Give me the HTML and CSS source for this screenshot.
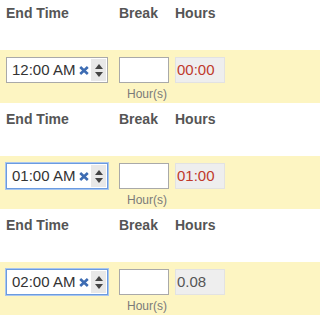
FILE: index.html
```html
<!DOCTYPE html>
<html>
<head>
<meta charset="utf-8">
<link rel="stylesheet" href="styles.css">
</head>
<body>
<div class="block">
  <div class="head">
    <div class="c1">End Time</div>
    <div class="c2">Break</div>
    <div class="c3">Hours</div>
  </div>
  <div class="row">
    <div class="c1">
      <div class="time">
        <span class="val">12:00 AM</span>
        <svg class="clear" width="10" height="9" viewBox="0 0 10 9"><path d="M1.2 1 L8.8 8 M8.8 1 L1.2 8" stroke="#3d6cb3" stroke-width="2.6"/></svg>
        <span class="spin"><i class="up"></i><i class="down"></i></span>
      </div>
    </div>
    <div class="c2">
      <div class="brk"></div>
      <div class="unit">Hour(s)</div>
    </div>
    <div class="c3"><div class="hrs red">00:00</div></div>
  </div>
</div>
<div class="block">
  <div class="head">
    <div class="c1">End Time</div>
    <div class="c2">Break</div>
    <div class="c3">Hours</div>
  </div>
  <div class="row">
    <div class="c1">
      <div class="time focus">
        <span class="val">01:00 AM</span>
        <svg class="clear" width="10" height="9" viewBox="0 0 10 9"><path d="M1.2 1 L8.8 8 M8.8 1 L1.2 8" stroke="#3d6cb3" stroke-width="2.6"/></svg>
        <span class="spin"><i class="up"></i><i class="down"></i></span>
      </div>
    </div>
    <div class="c2">
      <div class="brk"></div>
      <div class="unit">Hour(s)</div>
    </div>
    <div class="c3"><div class="hrs red">01:00</div></div>
  </div>
</div>
<div class="block">
  <div class="head">
    <div class="c1">End Time</div>
    <div class="c2">Break</div>
    <div class="c3">Hours</div>
  </div>
  <div class="row">
    <div class="c1">
      <div class="time focus">
        <span class="val">02:00 AM</span>
        <svg class="clear" width="10" height="9" viewBox="0 0 10 9"><path d="M1.2 1 L8.8 8 M8.8 1 L1.2 8" stroke="#3d6cb3" stroke-width="2.6"/></svg>
        <span class="spin"><i class="up"></i><i class="down"></i></span>
      </div>
    </div>
    <div class="c2">
      <div class="brk"></div>
      <div class="unit">Hour(s)</div>
    </div>
    <div class="c3"><div class="hrs">0.08</div></div>
  </div>
</div>
</body>
</html>
```
FILE: styles.css
```css
html, body {
  margin: 0;
  padding: 0;
  background: #fff;
  font-family: "Liberation Sans", Arial, sans-serif;
}
.block {
  margin-bottom: 3px;
}
.head {
  height: 50px;
  box-sizing: border-box;
  padding: 5px 0 0 6px;
  display: flex;
  font-size: 14px;
  line-height: 16px;
  font-weight: bold;
  color: #555;
}
.c1 { width: 113px; flex: none; }
.c2 { width: 56px; flex: none; }
.c3 { width: 50px; flex: none; }
.row {
  height: 53px;
  box-sizing: border-box;
  padding: 7px 0 0 6px;
  display: flex;
  background: #fdf5c2;
}
.time {
  width: 102px;
  height: 26px;
  box-sizing: border-box;
  border: 1px solid #a9a9a9;
  background: #fff;
  display: flex;
  align-items: center;
  padding-left: 5px;
}
.time.focus {
  border-color: #6b9be0;
  box-shadow: 0 0 0 1px #a9c6ee;
}
.val {
  font-size: 15px;
  color: #333;
  line-height: 18px;
  width: 67px;
  flex: none;
  white-space: nowrap;
}
.clear {
  flex: none;
  display: block;
}
.spin {
  margin-left: 2px;
  width: 15px;
  height: 22px;
  background: #e8e8e8;
  display: flex;
  flex-direction: column;
  align-items: center;
  justify-content: center;
  gap: 3px;
}
.up, .down {
  display: block;
  width: 0;
  height: 0;
  border-left: 4px solid transparent;
  border-right: 4px solid transparent;
}
.up { border-bottom: 5px solid #444; }
.down { border-top: 5px solid #444; }
.brk {
  width: 50px;
  height: 26px;
  box-sizing: border-box;
  border: 1px solid #a9a9a9;
  background: #fff;
}
.unit {
  margin-top: 4px;
  font-size: 12px;
  line-height: 14px;
  color: #7a7a7a;
  text-align: center;
}
.hrs {
  width: 50px;
  height: 26px;
  box-sizing: border-box;
  border: 1px solid #e2e2e2;
  background: #eeeeee;
  font-size: 15px;
  line-height: 24px;
  padding-left: 1px;
  color: #555;
}
.hrs.red {
  color: #c0392b;
}
```
